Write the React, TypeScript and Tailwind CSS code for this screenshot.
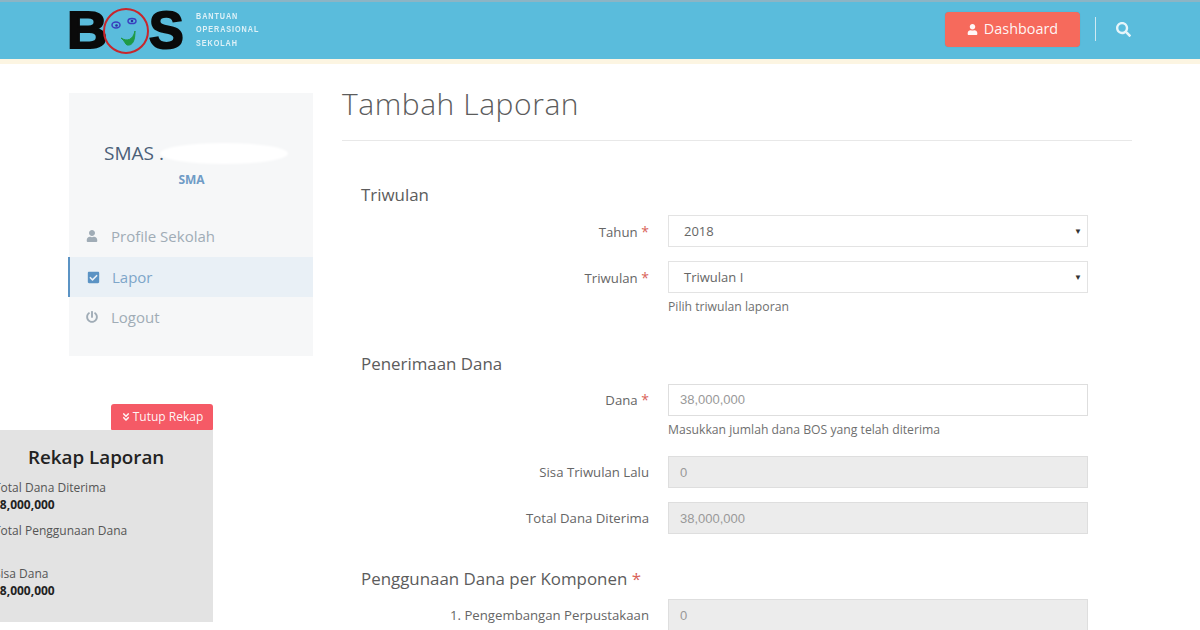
import { FaUser, FaCheckSquare, FaPowerOff, FaSearch, FaAngleDoubleDown } from "react-icons/fa";
import type { ReactNode } from "react";

function Logo() {
  return (
    <div className="flex items-center h-full">
      <div className="flex items-center h-[46px] w-[116px] relative -ml-[2px] -mt-[2px]">
        <span className="font-['Liberation_Sans',sans-serif] font-bold text-[52px] leading-none text-[#0a0a0a] [-webkit-text-stroke:2px_#0a0a0a] scale-x-[1.08] origin-left">B</span>
        <svg className="absolute left-[34px] top-[-1px]" width="50" height="50" viewBox="0 0 50 50" fill="none">
          <circle cx="25" cy="25" r="22" stroke="#c8262c" strokeWidth="2" />
          <ellipse cx="15" cy="19" rx="4" ry="3" stroke="#3a3fc0" strokeWidth="1.5" />
          <circle cx="15.5" cy="19.5" r="1.3" fill="#2a2fa0" />
          <ellipse cx="31" cy="15" rx="4" ry="2.6" stroke="#3a3fc0" strokeWidth="1.5" />
          <circle cx="31" cy="15" r="1.3" fill="#2a2fa0" />
          <path d="M20 32 C26 36 32 34 34 25 C34 34 32 40 26 39 C24 38 24 35 20 32 Z" fill="#1f9a44" stroke="#1f9a44" />
        </svg>
        <span className="absolute left-[82px] font-['Liberation_Sans',sans-serif] font-bold text-[52px] leading-none text-[#0a0a0a] [-webkit-text-stroke:2px_#0a0a0a]">S</span>
      </div>
      <div className="ml-[13px] -mt-[1px] font-['Liberation_Sans',sans-serif] font-bold text-[#dff1f7] text-[8.5px] leading-[13.5px] tracking-[1.1px] scale-x-[0.85] origin-left">
        <div>BANTUAN</div>
        <div>OPERASIONAL</div>
        <div>SEKOLAH</div>
      </div>
    </div>
  );
}

function Label({ text, req }: { text: string; req?: boolean }) {
  return (
    <div className="w-[307px] pr-[19px] text-right text-[13.2px] text-[#666]">
      {text}
      {req && <span className="text-[#d9635a] text-[14px]"> *</span>}
    </div>
  );
}

function SelectRow({ label, value, mb }: { label: string; value: string; mb: string }) {
  return (
    <div className={`flex items-center ${mb}`}>
      <div className="pt-[2px]">
        <Label text={label} req />
      </div>
      <div className="w-[420px] h-[32px] border border-[#e3e3e3] bg-white flex items-center justify-between pl-[15px] pr-[5px] text-[13px] text-[#666]">
        <span className="pt-[2px]">{value}</span>
        <span className="text-[8px] text-[#333]">▼</span>
      </div>
    </div>
  );
}

function InputRow({ label, value, req, disabled, mb }: { label: string; value: string; req?: boolean; disabled?: boolean; mb: string }) {
  return (
    <div className={`flex items-center ${mb}`}>
      <div className={disabled ? "pt-[2px]" : ""}>
        <Label text={label} req={req} />
      </div>
      <div className={`w-[420px] h-[32px] border border-[#dedede] flex items-center pl-[11px] text-[13px] font-['Liberation_Sans',sans-serif] text-[#999] ${disabled ? "bg-[#ececec] pt-[2px]" : "bg-white"}`}>
        {value}
      </div>
    </div>
  );
}

function Help({ text, mb }: { text: string; mb: string }) {
  return <div className={`pl-[307px] text-[12.2px] leading-[16px] text-[#6f6f6f] ${mb}`}>{text}</div>;
}

function Heading({ children, mb }: { children: ReactNode; mb: string }) {
  return <div className={`text-[16.9px] leading-[22px] text-[#5c5c5c] ${mb}`}>{children}</div>;
}

function NavItem({ icon, text, active }: { icon: ReactNode; text: string; active?: boolean }) {
  return (
    <div className={`flex items-center h-[40px] pl-[17px] text-[15px] ${active ? "bg-[#e9f0f6] text-[#7ea6c9] border-l-2 border-[#5b93c4] -ml-[1px] pl-[16px]" : "text-[#a0acb6]"}`}>
      <span className="w-[25px] flex items-center">{icon}</span>
      {text}
    </div>
  );
}

export default function App() {
  return (
    <div className="relative w-[1200px] h-[630px] overflow-hidden bg-white font-['Open_Sans',sans-serif]">
      <header className="h-[59px] bg-[#5abcdc] border-t-2 border-[#8cb4c4] flex items-center justify-between pl-[69px] pr-[69px]">
        <Logo />
        <div className="flex items-center -mt-[3px]">
          <div className="w-[135px] h-[35px] bg-[#f66a5c] rounded-[4px] flex items-center justify-center text-[14.4px] text-white/95 shadow-[0_0_1px_rgba(0,0,0,0.2)]">
            <FaUser className="text-[11px] mr-[6px]" />
            Dashboard
          </div>
          <div className="w-px h-[24px] bg-[#cfe9f2] ml-[15px]" />
          <div className="w-[35px] flex justify-end">
            <FaSearch className="text-[15px] text-[#e6f5fa]" />
          </div>
        </div>
      </header>
      <div className="h-[5px] bg-[#fcf5e2]" />

      <div className="flex pl-[69px] pt-[29px]">
        <aside className="w-[244px] h-[263px] bg-[#f6f7f8] shrink-0">
          <div className="pt-[47px] pl-[35px] text-[19px] leading-[26px] text-[#4b5f78]">SMAS .</div>
          <div className="mt-[6px] text-center text-[12px] leading-[16px] font-bold text-[#6f9bc6] pl-[1px]">SMA</div>
          <nav className="mt-[28px]">
            <NavItem icon={<FaUser className="text-[12px]" />} text="Profile Sekolah" />
            <div className="pt-[1px]">
              <NavItem active icon={<FaCheckSquare className="text-[13px] text-[#5b93c4]" />} text="Lapor" />
            </div>
            <NavItem icon={<FaPowerOff className="text-[12px]" />} text="Logout" />
          </nav>
        </aside>

        <main className="ml-[29px] w-[790px]">
          <h1 className="text-[30px] leading-[24px] font-light text-[#5c5c5c] tracking-[0.55px] -mt-[1px]">Tambah Laporan</h1>
          <div className="border-b border-[#e8e8e8] mt-[24px]" />
          <div className="pl-[19px] pt-[43px]">
            <Heading mb="mb-[9px]">Triwulan</Heading>
            <SelectRow label="Tahun" value="2018" mb="mb-[14px]" />
            <SelectRow label="Triwulan" value="Triwulan I" mb="mb-[6px]" />
            <Help text="Pilih triwulan laporan" mb="mb-[38px]" />
            <Heading mb="mb-[9px]">Penerimaan Dana</Heading>
            <InputRow label="Dana" value="38,000,000" req mb="mb-[6px]" />
            <Help text="Masukkan jumlah dana BOS yang telah diterima" mb="mb-[18px]" />
            <InputRow label="Sisa Triwulan Lalu" value="0" disabled mb="mb-[14px]" />
            <InputRow label="Total Dana Diterima" value="38,000,000" disabled mb="mb-[34px]" />
            <Heading mb="mb-[9px]">
              Penggunaan Dana per Komponen <span className="text-[#d9635a]">*</span>
            </Heading>
            <InputRow label="1. Pengembangan Perpustakaan" value="0" disabled mb="mb-0" />
          </div>
        </main>
      </div>

      {/* Redaction smear */}
      <div className="absolute left-[160px] top-[143px] w-[128px] h-[21px] bg-white rounded-[50%] blur-[1px]" />

      {/* Floating recap */}
      <div className="absolute left-0 top-[404px] w-[213px]">
        <div className="flex justify-end">
          <div className="w-[102px] h-[26px] bg-[#f55a66] rounded-t-[3px] rounded-b-[1px] flex items-center justify-center text-[12px] text-white/95">
            <FaAngleDoubleDown className="text-[10px] mr-[2px]" />
            Tutup Rekap
          </div>
        </div>
        <div className="h-[192px] bg-[#e3e3e3] overflow-hidden">
          <div className="pt-[14px] pl-[28px] text-[18.8px] leading-[26px] font-semibold text-[#222]">Rekap Laporan</div>
          <div className="ml-[-6px] mt-[9px] text-[12px] leading-[17px] text-[#555] whitespace-nowrap">
            <div>Total Dana Diterima</div>
            <div className="font-bold text-[#222] ml-[-1px]">38,000,000</div>
            <div className="mt-[9px]">Total Penggunaan Dana</div>
            <div className="h-[17px]" />
            <div className="mt-[9px]">Sisa Dana</div>
            <div className="font-bold text-[#222] ml-[-1px]">38,000,000</div>
          </div>
        </div>
      </div>
    </div>
  );
}
